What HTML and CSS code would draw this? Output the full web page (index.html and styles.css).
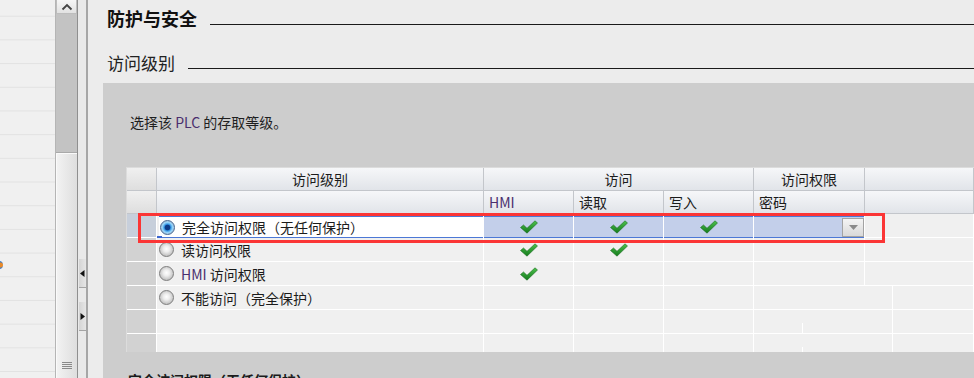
FILE: index.html
```html
<!DOCTYPE html>
<html lang="zh-CN">
<head>
<meta charset="utf-8">
<title>防护与安全</title>
<link rel="stylesheet" href="styles.css">
</head>
<body>
<div class="list"><span class="list-icon"></span></div>
<div class="vscroll">
  <div class="vs-up"><svg width="12" height="8" viewBox="0 0 12 8"><path d="M1.5 6.5 L6 2 L10.5 6.5" fill="none" stroke="#444" stroke-width="1.8"/></svg></div>
  <div class="vs-thumb"></div>
  <div class="vs-track"><div class="vs-grip"><i></i><i></i><i></i><i></i></div></div>
</div>
<div class="splitter">
  <div class="sp-btn sp-left"><svg width="5" height="7" viewBox="0 0 5 7"><path d="M4.5 0 L0 3.5 L4.5 7 Z" fill="#111"/></svg></div>
  <div class="sp-btn sp-right"><svg width="5" height="7" viewBox="0 0 5 7"><path d="M0.5 0 L5 3.5 L0.5 7 Z" fill="#111"/></svg></div>
</div>
<div class="main">
  <div class="sec-head"><span class="sec-title">防护与安全</span><span class="rule"></span></div>
  <div class="sub-head"><span class="sub-title">访问级别</span><span class="rule"></span></div>
  <div class="panel">
    <p class="intro">选择该 <span class="abbr">PLC</span> 的存取等级。</p>
    <div class="grid">
      <div class="h rh"></div>
      <div class="h c-level center">访问级别</div>
      <div class="h c-access center">访问</div>
      <div class="h c-pw center">访问权限</div>
      <div class="h c-rest"></div>

      <div class="h rh"></div>
      <div class="h c-level"></div>
      <div class="h"><span class="abbr">HMI</span></div>
      <div class="h">读取</div>
      <div class="h">写入</div>
      <div class="h c-pw">密码</div>
      <div class="h c-rest"></div>

      <div class="d rh rh-sel"></div>
      <div class="d c-level sel-cell"><div class="sel white"><span class="radio on"></span>完全访问权限（无任何保护）</div><span class="handle"></span></div>
      <div class="d sel-cell"><div class="sel blue"><svg class="chk" viewBox="0 0 18 14"><use href="#chk"/></svg></div></div>
      <div class="d sel-cell"><div class="sel blue"><svg class="chk" viewBox="0 0 18 14"><use href="#chk"/></svg></div></div>
      <div class="d sel-cell"><div class="sel blue"><svg class="chk" viewBox="0 0 18 14"><use href="#chk"/></svg></div></div>
      <div class="d c-pw sel-cell"><div class="sel blue end"><span class="dd"><svg width="9" height="5" viewBox="0 0 9 5"><path d="M0 0 H9 L4.5 5 Z" fill="#8a8a8a"/></svg></span></div></div>
      <div class="d c-rest"></div>

      <div class="d rh"></div>
      <div class="d c-level"><span class="radio"></span>读访问权限</div>
      <div class="d center"><svg class="chk" viewBox="0 0 18 14"><use href="#chk"/></svg></div>
      <div class="d center"><svg class="chk" viewBox="0 0 18 14"><use href="#chk"/></svg></div>
      <div class="d"></div>
      <div class="d c-pw"></div>
      <div class="d c-rest"></div>

      <div class="d rh"></div>
      <div class="d c-level"><span class="radio"></span><span class="abbr">HMI</span>&nbsp;访问权限</div>
      <div class="d center"><svg class="chk" viewBox="0 0 18 14"><use href="#chk"/></svg></div>
      <div class="d"></div>
      <div class="d"></div>
      <div class="d c-pw"></div>
      <div class="d c-rest"></div>

      <div class="d rh"></div>
      <div class="d c-level"><span class="radio"></span>不能访问（完全保护）</div>
      <div class="d"></div>
      <div class="d"></div>
      <div class="d"></div>
      <div class="d c-pw2"></div>
      <div class="d c-rest2"></div>

      <div class="d rh"></div>
      <div class="d c-level"></div>
      <div class="d"></div>
      <div class="d"></div>
      <div class="d"></div>
      <div class="d c-pw2 split"></div>
      <div class="d c-rest2"></div>

      <div class="d rh last"></div>
      <div class="d c-level last"></div>
      <div class="d last"></div>
      <div class="d last"></div>
      <div class="d last"></div>
      <div class="d c-pw2 split last"></div>
      <div class="d c-rest2 last"></div>

      <div class="mark"></div>
    </div>
    <p class="next">完全访问权限（无任何保护）</p>
  </div>
</div>
<svg width="0" height="0" class="defs">
  <defs>
    <linearGradient id="g" x1="0" y1="0" x2="0" y2="1">
      <stop offset="0" stop-color="#4cc24c"/>
      <stop offset="1" stop-color="#137a1c"/>
    </linearGradient>
    <path id="chk" d="M0.5 7.5 L3.5 5 L7 8.3 L15 0.8 L17.5 3 L7 13.2 Z" fill="url(#g)" stroke="#1d6b22" stroke-width="0.6"/>
  </defs>
</svg>
</body>
</html>
```
FILE: styles.css
```css
* { box-sizing: border-box; }
html, body { margin: 0; padding: 0; }
body {
  width: 974px;
  height: 378px;
  overflow: hidden;
  display: flex;
  font-family: "Noto Sans CJK SC", "Noto Sans", sans-serif;
  font-size: 14px;
  color: #1b1b1b;
  background: #ececec;
}
.defs { position: absolute; }

.list {
  position: relative;
  width: 55px;
  flex: none;
  background-color: #f0f0f0;
  background-image: linear-gradient(to bottom, transparent 22.7px, #e2e2e2 22.7px);
  background-size: 100% 23.7px;
  background-position: 0 -7px;
}
.list-icon {
  position: absolute;
  left: -5px;
  top: 261px;
  width: 8px;
  height: 8px;
  border-radius: 50%;
  background: radial-gradient(circle at 70% 50%, #e88a2a 0 2px, #3a7ac8 3px);
}

.vscroll {
  width: 22px;
  flex: none;
  display: flex;
  flex-direction: column;
  border-left: 1px solid #b5b5b5;
  background: #e4e4e4;
}
.vs-up {
  height: 14px;
  flex: none;
  display: flex;
  align-items: center;
  justify-content: center;
  background: linear-gradient(#f6f6f6, #e2e2e2);
  border: 1px solid #bdbdbd;
  border-top: none;
}
.vs-thumb {
  height: 139px;
  flex: none;
  background: #c3c3c3;
  border-bottom: 1px solid #a9a9a9;
}
.vs-track {
  flex: 1;
  display: flex;
  flex-direction: column;
  justify-content: flex-end;
  align-items: center;
  padding-bottom: 9px;
  background: linear-gradient(to right, #f2f2f2, #dedede);
  border-left: 1px solid #fafafa;
  border-top: 1px solid #fafafa;
}
.vs-grip { display: flex; flex-direction: column; gap: 1px; }
.vs-grip i { display: block; width: 10px; height: 1px; background: #8a8a8a; }

.splitter {
  width: 11px;
  flex: none;
  display: flex;
  flex-direction: column;
  border-left: 1px solid #8f8f8f;
  border-right: 2px solid #a6a6a6;
  padding-left: 1px;
  background: #e9e9e9;
}
.sp-btn {
  height: 29px;
  flex: none;
  display: flex;
  align-items: center;
  justify-content: center;
  background: linear-gradient(to right, #d4d4d4, #e6e6e6);
  border-bottom: 1px solid #a4a4a4;
}
.sp-left { margin-top: 259px; }
.sp-right { margin-top: 14px; }

.main {
  flex: 1;
  display: flex;
  flex-direction: column;
  min-width: 0;
  overflow: hidden;
}
.sec-head, .sub-head {
  height: 36px;
  flex: none;
  display: flex;
  align-items: center;
  padding-left: 19px;
}
.sub-head { margin-top: 8px; }
.sec-title { font-size: 18px; font-weight: bold; color: #111; }
.sub-title { font-size: 17px; color: #222; }
.rule {
  flex: 1;
  height: 1px;
  background: #1a1a1a;
  margin-top: 12px;
  margin-left: 13px;
}

.panel {
  flex: none;
  height: 295px;
  margin-top: 3px;
  margin-left: 15px;
  background: #cdcdcd;
  padding-top: 29px;
  padding-left: 24px;
  overflow: hidden;
}
.intro {
  margin: 0 0 35px 3px;
  line-height: 20px;
  color: #1f1f1f;
}
.abbr { color: #4a2f6e; }

.grid {
  position: relative;
  display: grid;
  grid-template-columns: 30px 327px 90px 90px 90px 111px 28px 1fr;
  grid-template-rows: 23px 23px 24px 24px 24px 24px 24px 18px;
  border-top: 1px solid #dcdcdc;
  border-left: 1px solid #dcdcdc;
  margin-left: -1px;
}
.h {
  background: linear-gradient(#f6f7f9, #e1e4e9);
  border-right: 1px solid #c3c6cb;
  border-bottom: 1px solid #c3c6cb;
  padding-left: 5px;
  line-height: 22px;
  white-space: nowrap;
}
.h.rh { background: linear-gradient(#f0f0f0, #dedede); }
.center { text-align: center; padding-left: 0; }
.c-access { grid-column: span 3; }
.c-rest { grid-column: span 2; }
.c-pw2 { grid-column: span 2; }
.c-rest2 { grid-column: span 1; }

.d {
  background: #f0f0f0;
  border-right: 1px solid #ffffff;
  border-bottom: 1px solid #ffffff;
  display: flex;
  align-items: center;
  white-space: nowrap;
  position: relative;
}
.d.center { justify-content: center; }
.d.last { border-bottom: none; }
.d.rh { background: #d2d2d2; }
.d.rh-sel { background: #c7cfdb; }
.d.c-level { padding-left: 2px; }
.split::after {
  content: "";
  position: absolute;
  left: 48px;
  top: 13px;
  bottom: 0;
  width: 1px;
  background: #ffffff;
}

.sel-cell { align-items: flex-start; }
.sel {
  margin-top: 2px;
  height: 22px;
  width: 100%;
  display: flex;
  align-items: center;
  justify-content: center;
  border-top: 1px solid #4c78d6;
  border-bottom: 1px solid #4c78d6;
}
.sel.white { background: #ffffff; justify-content: flex-start; padding-left: 1px; }
.sel.blue { background: #c3cfea; }
.sel.end { justify-content: flex-end; }
.handle {
  position: absolute;
  left: 0;
  top: 22px;
  width: 5px;
  height: 5px;
  background: #3b66d0;
}
.dd {
  width: 22px;
  height: 19px;
  display: flex;
  align-items: center;
  justify-content: center;
  background: linear-gradient(#f4f4f4, #d9d9d9);
  border: 1px solid #a3a3a3;
}

.radio {
  width: 15px;
  height: 15px;
  border-radius: 50%;
  border: 1px solid #7d7d7d;
  background: radial-gradient(circle at 50% 45%, #ffffff 0, #eeeeee 3px, #c2c2c2 7px);
  margin-right: 7px;
  flex: none;
}
.radio.on {
  border-color: #44668f;
  background: radial-gradient(circle, #0c3a88 0 2.5px, #2e8fe0 3.2px, #8fd2fa 5px, #a8c6e2 6.5px);
}

.chk { width: 18px; height: 14px; display: block; }

.mark {
  position: absolute;
  left: 11px;
  top: 45px;
  width: 747px;
  height: 30px;
  border: 3px solid #fb3535;
  pointer-events: none;
}

.next {
  margin: 19px 0 0 1px;
  font-weight: bold;
  line-height: 18px;
}
```
